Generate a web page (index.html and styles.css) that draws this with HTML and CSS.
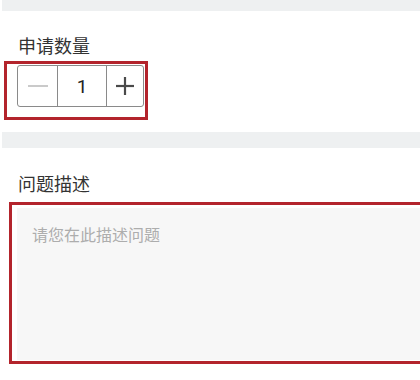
FILE: index.html
```html
<!DOCTYPE html>
<html>
<head>
<meta charset="utf-8">
<link rel="stylesheet" href="styles.css">
</head>
<body>
<div class="band band-top"></div>
<section class="section section-qty">
  <div class="label">申请数量</div>
  <div class="highlight highlight-qty">
    <div class="stepper">
      <div class="step step-minus">
        <svg width="20" height="20" viewBox="0 0 20 20"><line x1="0" y1="10" x2="20" y2="10" stroke="#bdbdbd" stroke-width="1.6"/></svg>
      </div>
      <div class="step step-value">1</div>
      <div class="step step-plus">
        <svg width="20" height="20" viewBox="0 0 20 20"><line x1="1" y1="10" x2="19" y2="10" stroke="#4a4a4a" stroke-width="2.2"/><line x1="10" y1="1" x2="10" y2="19" stroke="#4a4a4a" stroke-width="2.2"/></svg>
      </div>
    </div>
  </div>
</section>
<div class="band band-mid"></div>
<section class="section section-desc">
  <div class="label">问题描述</div>
  <div class="highlight highlight-desc">
    <div class="textarea">请您在此描述问题</div>
  </div>
</section>
</body>
</html>
```

FILE: styles.css
```css
html, body {
  margin: 0;
  padding: 0;
  background: #ffffff;
  overflow: hidden;
  width: 420px;
  height: 380px;
}
body {
  font-family: "Noto Sans CJK SC", "Noto Sans", sans-serif;
  color: #333;
}
.band {
  background: #eef0f1;
  margin-left: 2px;
}
.band-top { height: 11px; }
.band-mid { height: 16px; }
.section {
  background: #fff;
}
.section-qty {
  padding: 22px 0 12px 0;
  height: 87px;
  box-sizing: content-box;
}
.label {
  font-size: 18px;
  line-height: 24px;
  height: 24px;
  padding-left: 18px;
  color: #333;
}
.highlight {
  border: 3px solid #b3242c;
}
.highlight-qty {
  margin: 4px 0 0 4px;
  box-sizing: border-box;
  width: 144px;
  height: 59px;
  padding: 1px 1px 10px 10px;
}
.stepper {
  display: flex;
  height: 42px;
  border: 1px solid #8a8a8a;
  border-radius: 3px;
  box-sizing: border-box;
}
.step {
  display: flex;
  align-items: center;
  justify-content: center;
}
.step-minus {
  width: 39px;
  border-right: 1px solid #8a8a8a;
}
.step-value {
  width: 48px;
  border-right: 1px solid #8a8a8a;
  font-family: "Roboto", "Noto Sans", sans-serif;
  font-size: 19px;
  color: #222;
}
.step-plus {
  flex: 1;
}
.section-desc {
  padding-top: 23px;
}
.highlight-desc {
  margin: 7px 0 0 9px;
  border-right: 0;
  height: 162px;
  box-sizing: border-box;
  padding: 3px 0 1px 5px;
}
.textarea {
  background: #f7f7f7;
  height: 100%;
  box-sizing: border-box;
  padding: 15px 0 0 15px;
  font-size: 16px;
  line-height: 22px;
  color: #adadad;
}
```
